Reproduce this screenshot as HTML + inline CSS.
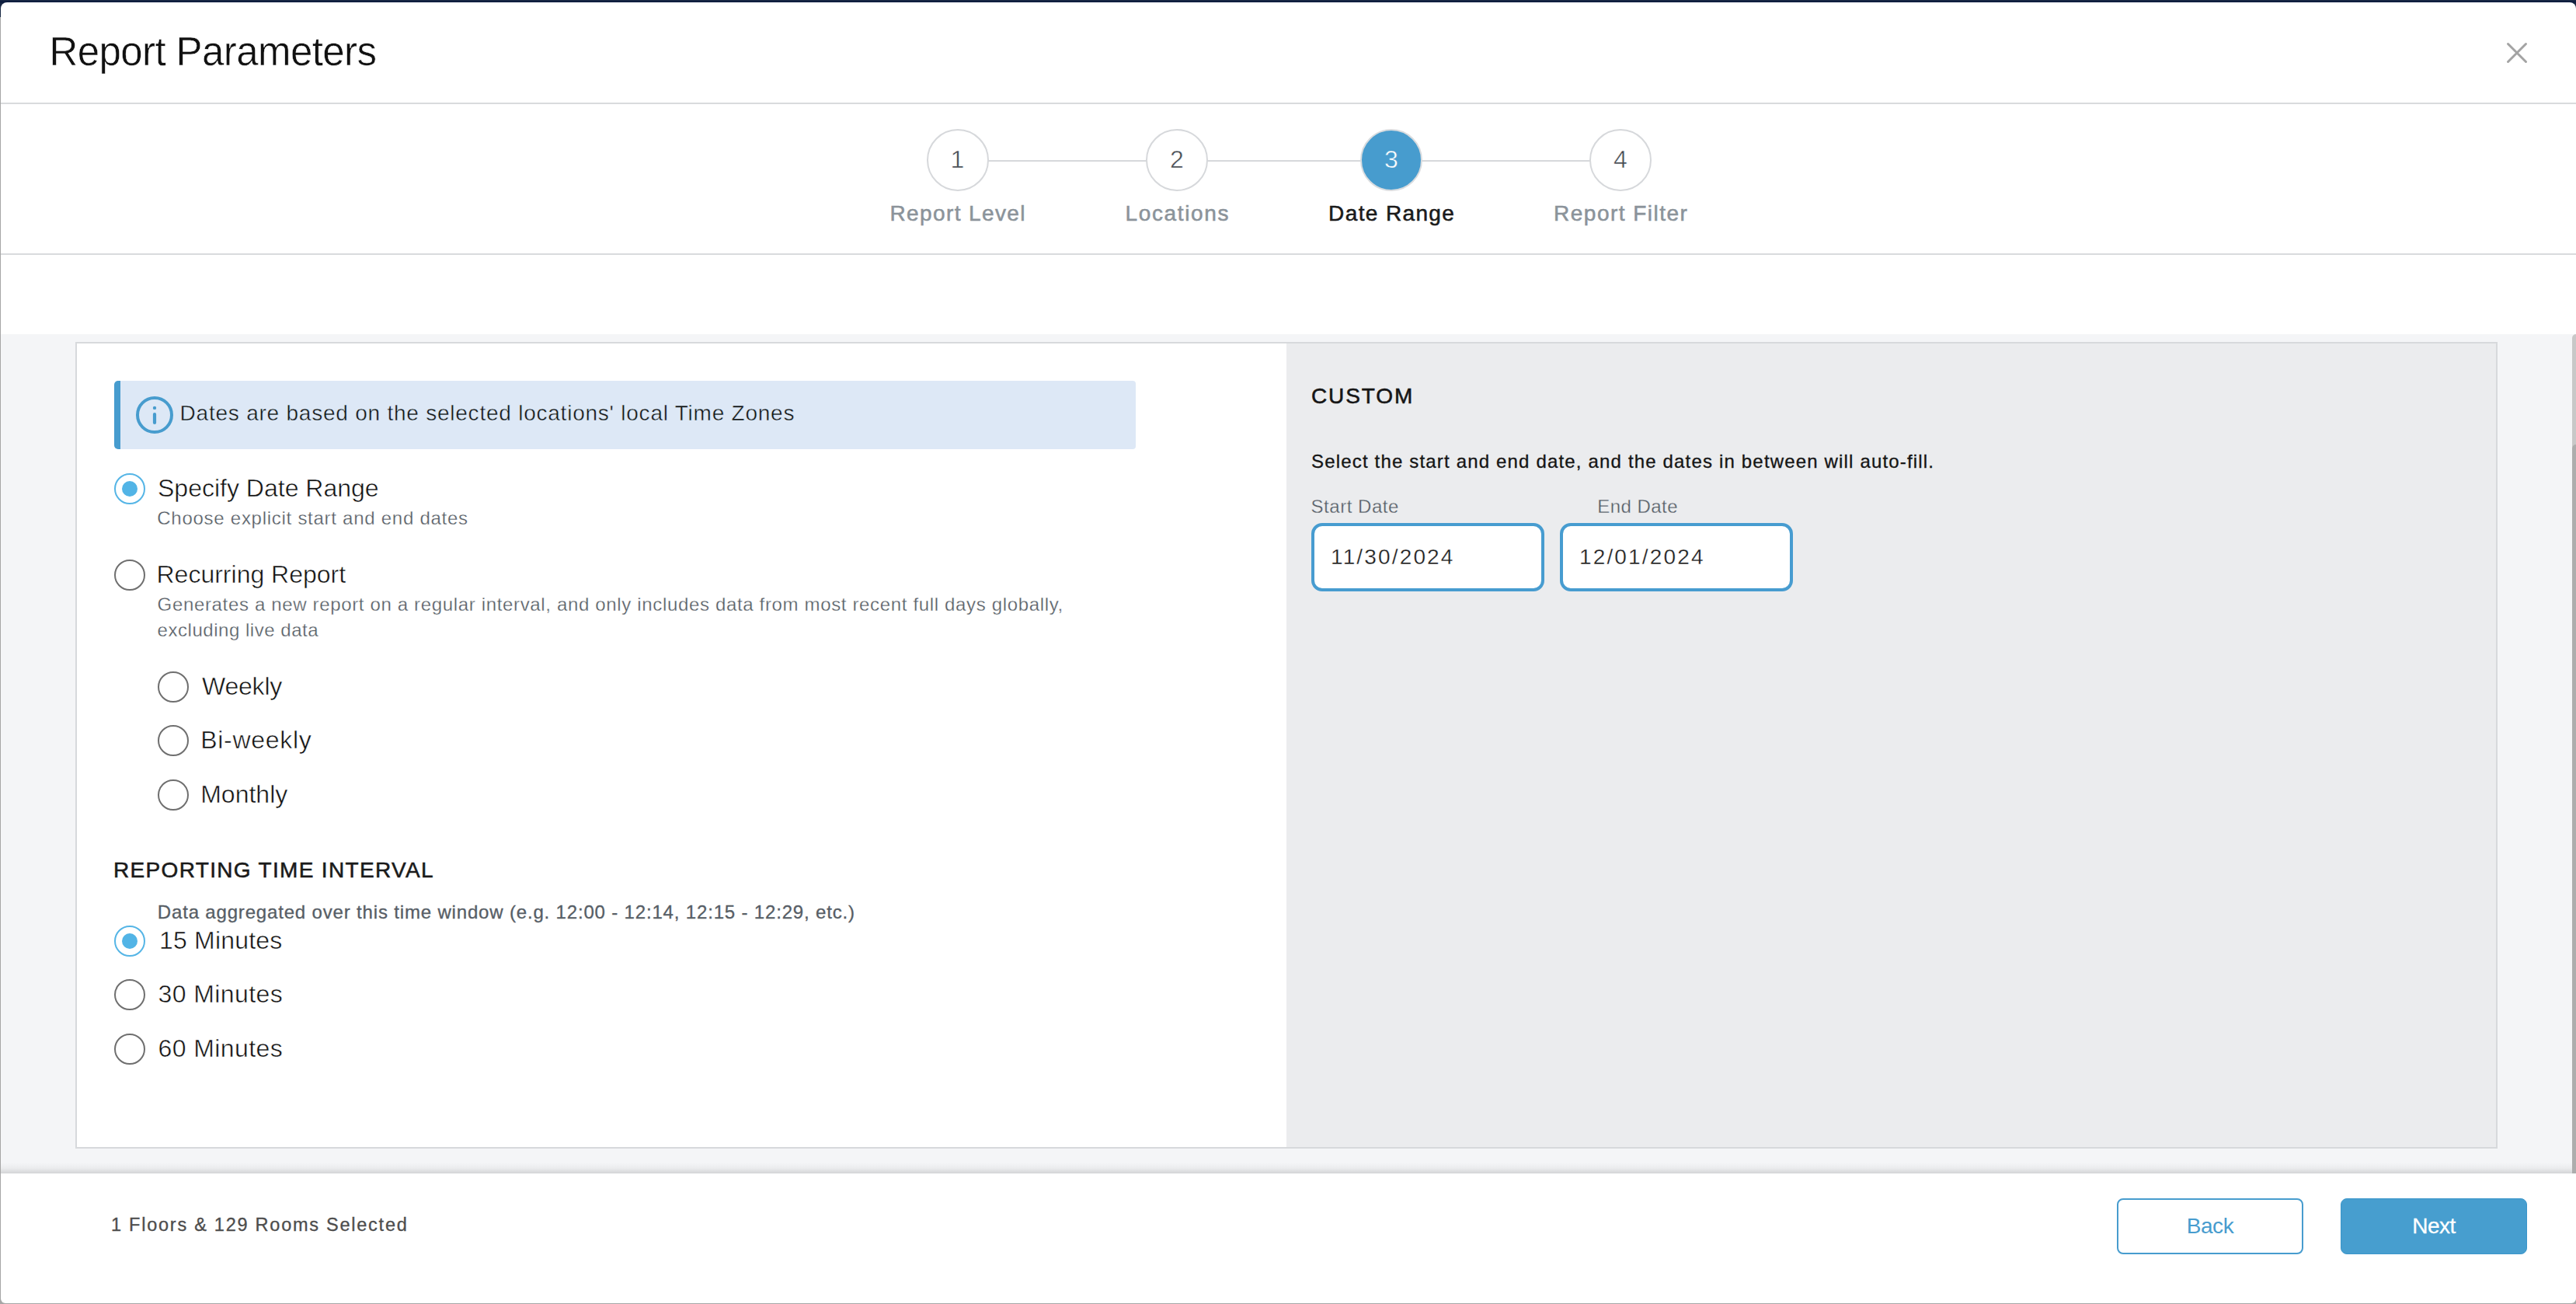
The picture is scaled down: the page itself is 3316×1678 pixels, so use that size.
<!DOCTYPE html>
<html lang="en"><head><meta charset="utf-8"><title>Report Parameters</title>
<style>
html,body{margin:0;padding:0;width:3316px;height:1678px;overflow:hidden;background:#fff;font-family:"Liberation Sans",sans-serif;}
h1,h2,p,label{margin:0;font-weight:400;display:block;}
.b{position:absolute;}
.t{position:absolute;white-space:nowrap;line-height:1;}
.m{-webkit-text-stroke:0.55px currentColor;}
.m2{-webkit-text-stroke:0.3px currentColor;}
.m3{-webkit-text-stroke:0.32px currentColor;}
.th{-webkit-text-stroke:0.5px #fff;}
.thb{-webkit-text-stroke:0.5px #479cce;}
.th2{-webkit-text-stroke:0.28px #fff;}
.thi{-webkit-text-stroke:0.45px #dde8f6;}
.thg{-webkit-text-stroke:0.3px #ebecee;}
.btn{width:240px;height:72px;box-sizing:border-box;border-radius:8px;margin:0;padding:0 0 2px;font-family:inherit;font-size:28px;text-align:center;display:block;}
.rd{position:absolute;width:40px;height:40px;box-sizing:border-box;border:2px solid #6f6f6f;border-radius:50%;background:#fff;}
.rd.on{border-color:#55b5e6;}
.rd.on i{position:absolute;left:8px;top:8px;width:20px;height:20px;border-radius:50%;background:#52b4e6;}
</style></head>
<body>
<div class="b" style="left:0px;top:0px;width:3316px;height:1678px;background:#a6a6a6;"></div>
<div class="b" style="left:0px;top:0px;width:3316px;height:22px;background:#172643;"></div>
<div class="b" style="left:0px;top:2px;width:3316px;height:1px;background:#05143a;"></div>
<div class="b" style="left:1px;top:3px;width:3315px;height:1674px;background:#fff;border-radius:8px 8px 6px 6px;"></div>
<div class="b" style="left:0px;top:1677px;width:3316px;height:1px;background:#a6a6a6;"></div>
<header>
<h1 class="t th" style="top:40.63px;font-size:51px;color:#111;letter-spacing:-0.58px;left:63.4px;">Report Parameters</h1>
<svg class="b" style="left:3224px;top:52px" width="32" height="32" viewBox="0 0 32 32"><path d="M4.5 4.5 L27.5 27.5 M27.5 4.5 L4.5 27.5" stroke="#a3a3a3" stroke-width="3" stroke-linecap="round" fill="none"/></svg>
<div class="b" style="left:1px;top:132px;width:3315px;height:2px;background:#d9dbdd;"></div>
</header>
<nav>
<div class="b" style="left:1272px;top:206px;width:204px;height:2px;background:#d6d8db;"></div>
<div class="b" style="left:1554px;top:206px;width:198px;height:2px;background:#d6d8db;"></div>
<div class="b" style="left:1830px;top:206px;width:217px;height:2px;background:#d6d8db;"></div>
<div class="b" style="left:1192.5px;top:166px;width:80px;height:80px;background:#fff;border-radius:50%;box-sizing:border-box;border:2px solid #d6d8db;"></div>
<div class="t th" style="top:189.21px;font-size:32px;color:#454b52;left:632.5px;width:1200px;text-align:center;">1</div>
<div class="t m" style="top:260.50px;font-size:28px;color:#8b939a;letter-spacing:1.4px;left:632.5px;width:1201.4px;text-align:center;">Report Level</div>
<div class="b" style="left:1475px;top:166px;width:80px;height:80px;background:#fff;border-radius:50%;box-sizing:border-box;border:2px solid #d6d8db;"></div>
<div class="t th" style="top:189.21px;font-size:32px;color:#454b52;left:915px;width:1200px;text-align:center;">2</div>
<div class="t m" style="top:260.50px;font-size:28px;color:#8b939a;letter-spacing:1.65px;left:915px;width:1201.65px;text-align:center;">Locations</div>
<div class="b" style="left:1751px;top:166px;width:80px;height:80px;background:#479cce;border-radius:50%;box-sizing:border-box;border:2px solid #d9dcdf;"></div>
<div class="t thb" style="top:189.21px;font-size:32px;color:#fff;left:1191px;width:1200px;text-align:center;">3</div>
<div class="t m" style="top:260.50px;font-size:28px;color:#1a1a1a;letter-spacing:1.37px;left:1191px;width:1201.37px;text-align:center;">Date Range</div>
<div class="b" style="left:2046px;top:166px;width:80px;height:80px;background:#fff;border-radius:50%;box-sizing:border-box;border:2px solid #d6d8db;"></div>
<div class="t th" style="top:189.21px;font-size:32px;color:#454b52;left:1486px;width:1200px;text-align:center;">4</div>
<div class="t m" style="top:260.50px;font-size:28px;color:#8b939a;letter-spacing:1.48px;left:1486px;width:1201.48px;text-align:center;">Report Filter</div>
<div class="b" style="left:1px;top:326px;width:3315px;height:2px;background:#d9dbdd;"></div>
</nav>
<main>
<div class="b" style="left:1px;top:430px;width:3315px;height:1080px;background:#f4f5f7;"></div>
<div class="b" style="left:1px;top:1496px;width:3315px;height:14px;background:linear-gradient(to bottom, rgba(0,0,0,0), rgba(0,0,0,0.035) 50%, rgba(0,0,0,0.135));"></div>
<div class="b" style="left:3311px;top:430px;width:5px;height:1080px;background:#c8c8c8;border-radius:5px 0 0 0;"></div>
<div class="b" style="left:3311px;top:572px;width:5px;height:938px;background:#adadad;border-radius:5px 0 0 0;"></div>
<div class="b" style="left:97px;top:440px;width:3118px;height:1038px;background:#fff;box-sizing:border-box;border:2px solid #d7d9dc;"></div>
<div class="b" style="left:1656px;top:442px;width:1557px;height:1034px;background:#ebecee;"></div>
<section>
<div class="b" style="left:147px;top:490px;width:1315px;height:88px;background:#dde8f6;border-radius:5px 4px 4px 5px;box-sizing:border-box;border-left:8px solid #479cce;"></div>
<svg class="b" style="left:173px;top:508px" width="52" height="52" viewBox="0 0 52 52"><circle cx="26" cy="26" r="22" fill="none" stroke="#479cce" stroke-width="4"/><circle cx="26" cy="16.9" r="2.2" fill="#479cce"/><path d="M26 25.1 V35.9" stroke="#479cce" stroke-width="4.2" stroke-linecap="round"/></svg>
<div class="t thi" style="top:517.80px;font-size:28px;color:#141414;letter-spacing:0.77px;left:231.6px;">Dates are based on the selected locations' local Time Zones</div>
<div class="rd on" style="left:147px;top:609px"><i></i></div>
<div class="t th" style="top:612.21px;font-size:32px;color:#111;left:203px;">Specify Date Range</div>
<div class="t th2" style="top:654.68px;font-size:24px;color:#575e66;letter-spacing:0.73px;left:202.3px;">Choose explicit start and end dates</div>
<div class="rd" style="left:147px;top:720px"></div>
<div class="t th" style="top:722.51px;font-size:32px;color:#111;left:201.5px;">Recurring Report</div>
<div class="t th2" style="top:765.88px;font-size:24px;color:#575e66;letter-spacing:0.655px;left:202.6px;">Generates a new report on a regular interval, and only includes data from most recent full days globally,</div>
<div class="t th2" style="top:799.08px;font-size:24px;color:#575e66;letter-spacing:0.53px;left:202.6px;">excluding live data</div>
<div class="rd" style="left:203px;top:864px"></div>
<div class="t th" style="top:867.11px;font-size:32px;color:#111;letter-spacing:-0.2px;left:260px;">Weekly</div>
<div class="rd" style="left:203px;top:933px"></div>
<div class="t th" style="top:936.11px;font-size:32px;color:#111;letter-spacing:0.7px;left:258.2px;">Bi-weekly</div>
<div class="rd" style="left:203px;top:1003px"></div>
<div class="t th" style="top:1006.11px;font-size:32px;color:#111;left:258.2px;">Monthly</div>
<h2 class="t m" style="top:1105.60px;font-size:28px;color:#1a1a1a;letter-spacing:1.33px;left:146px;">REPORTING TIME INTERVAL</h2>
<div class="t m3" style="top:1162.18px;font-size:24px;color:#575e66;letter-spacing:0.83px;left:202.8px;">Data aggregated over this time window (e.g. 12:00 - 12:14, 12:15 - 12:29, etc.)</div>
<div class="rd on" style="left:147px;top:1191px"><i></i></div>
<div class="t th" style="top:1193.91px;font-size:32px;color:#111;letter-spacing:0.2px;left:205px;">15 Minutes</div>
<div class="rd" style="left:147px;top:1260px"></div>
<div class="t th" style="top:1262.91px;font-size:32px;color:#111;letter-spacing:0.42px;left:203.5px;">30 Minutes</div>
<div class="rd" style="left:147px;top:1330px"></div>
<div class="t th" style="top:1332.91px;font-size:32px;color:#111;letter-spacing:0.42px;left:203.5px;">60 Minutes</div>
</section>
<section>
<h2 class="t m" style="top:495.50px;font-size:28px;color:#151515;letter-spacing:1.9px;left:1688px;">CUSTOM</h2>
<div class="t m3" style="top:581.98px;font-size:24px;color:#151515;letter-spacing:1.17px;left:1688px;">Select the start and end date, and the dates in between will auto-fill.</div>
<label class="t thg" style="top:639.98px;font-size:24px;color:#555d66;letter-spacing:0.52px;left:1687.6px;">Start Date</label>
<label class="t thg" style="top:639.98px;font-size:24px;color:#555d66;letter-spacing:0.45px;left:2056.3px;">End Date</label>
<div class="b" style="left:1688px;top:673px;width:300px;height:88px;background:#fff;box-sizing:border-box;border:4px solid #479cd0;border-radius:14px;"></div>
<div class="t th2" style="top:702.70px;font-size:28px;color:#1e1e1e;letter-spacing:2.15px;left:1713px;">11/30/2024</div>
<div class="b" style="left:2008px;top:673px;width:300px;height:88px;background:#fff;box-sizing:border-box;border:4px solid #479cd0;border-radius:14px;"></div>
<div class="t th2" style="top:702.70px;font-size:28px;color:#1e1e1e;letter-spacing:2.15px;left:2033px;">12/01/2024</div>
</section>
</main>
<footer>
<div class="t m3" style="top:1564.91px;font-size:23.5px;color:#4d4d4d;letter-spacing:1.75px;left:143.0px;">1 Floors &amp; 129 Rooms Selected</div>
<button class="b btn" style="left:2725px;top:1542px;background:#fff;border:2px solid #479cce;color:#479cce;letter-spacing:-0.4px;line-height:67px;">Back</button>
<button class="b btn m2" style="left:3013px;top:1542px;background:#479ecf;border:1px solid #3b96ca;color:#fff;letter-spacing:-0.5px;line-height:69px;">Next</button>
</footer>
<script>(function(){var w=window.innerWidth;if(w&&Math.abs(w-3316)>1){document.documentElement.style.zoom=w/3316;}})();</script>
</body></html>
